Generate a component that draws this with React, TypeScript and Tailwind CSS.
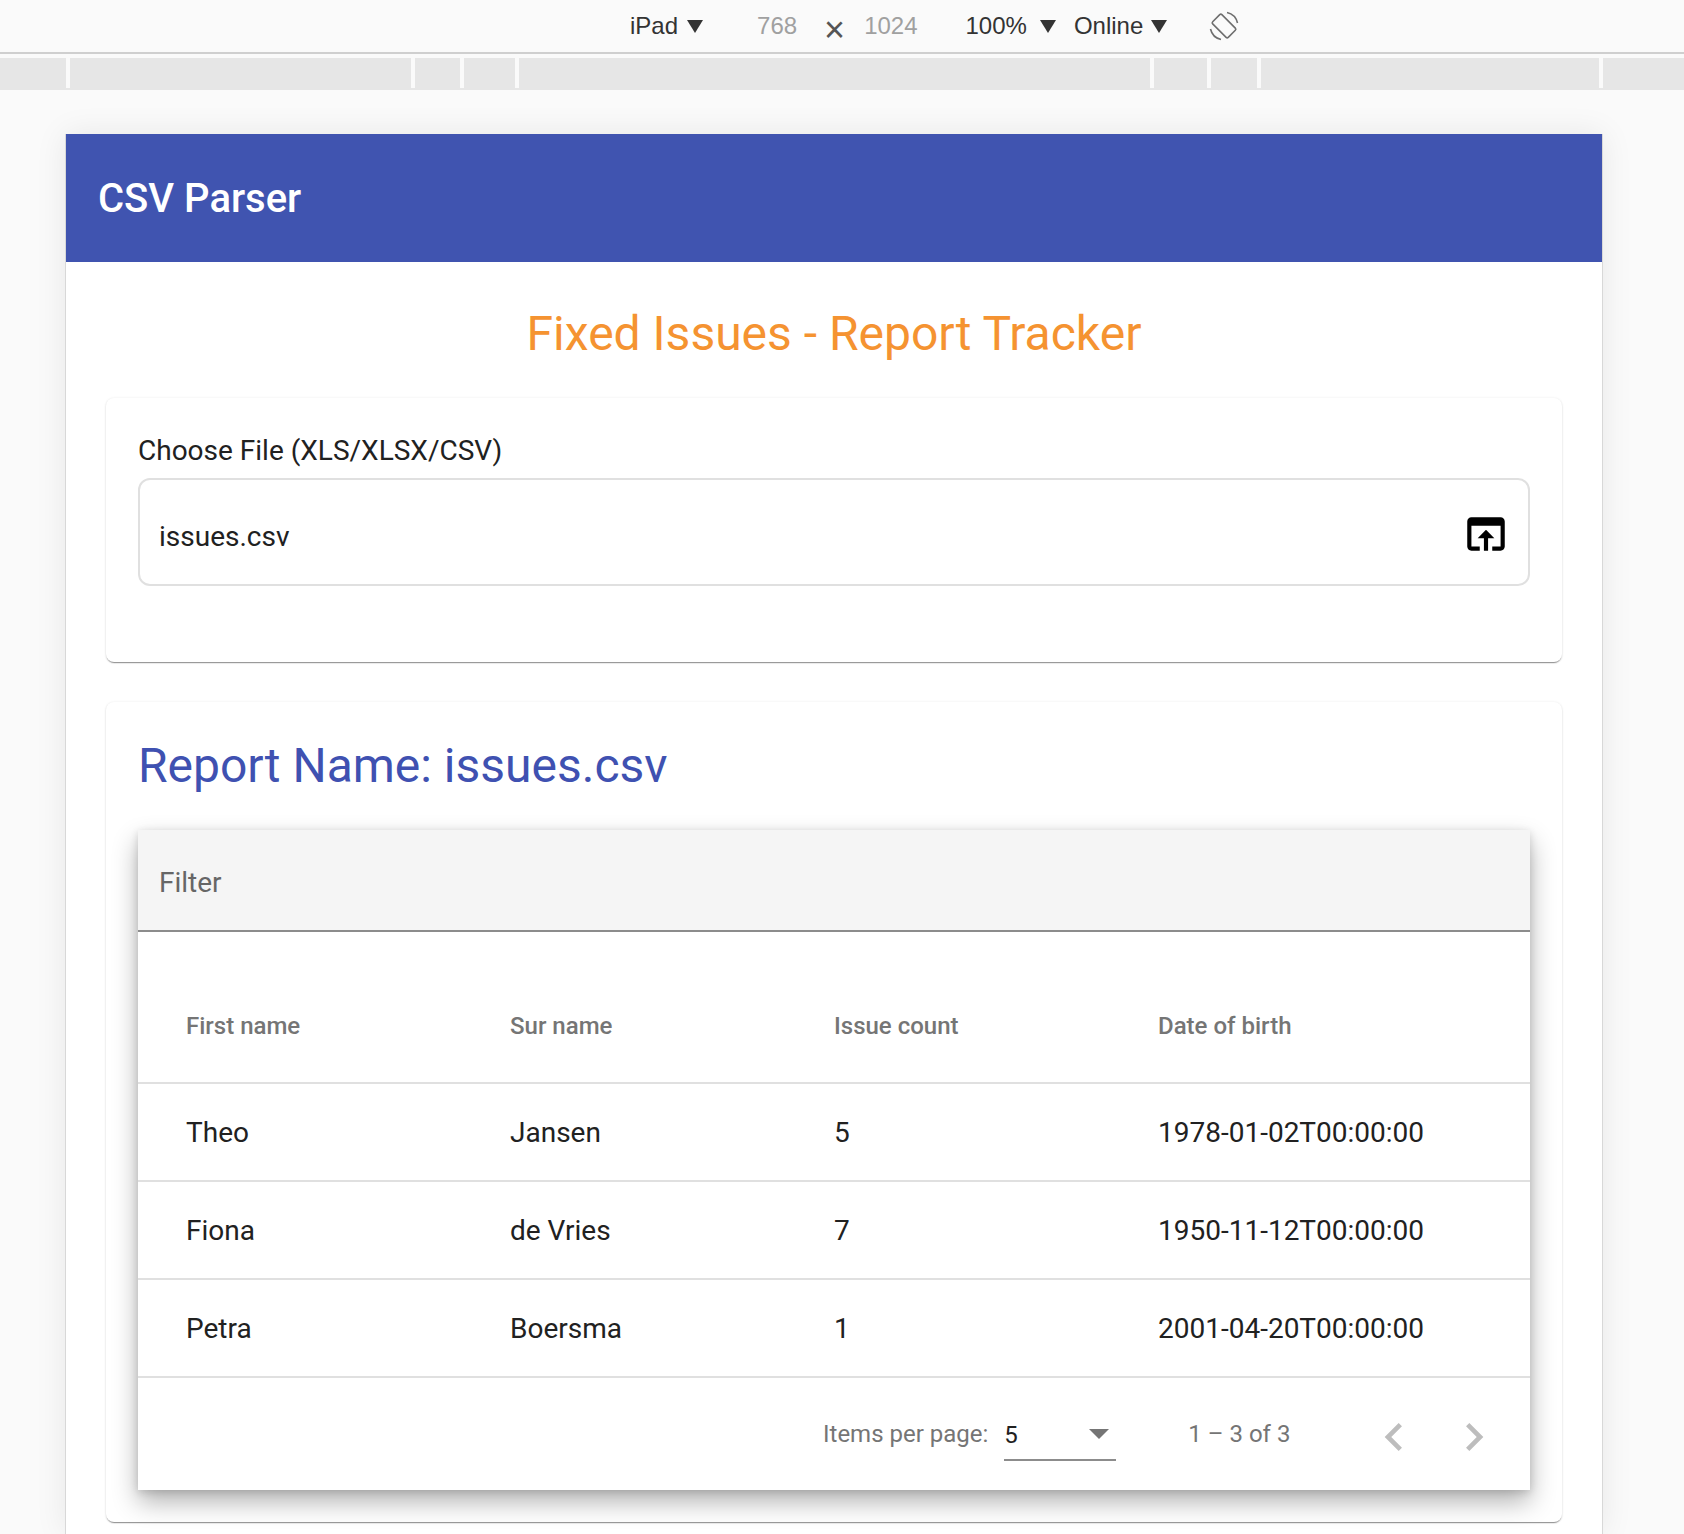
// App.tsx
const people = [
  { first: 'Theo', last: 'Jansen', count: '5', dob: '1978-01-02T00:00:00' },
  { first: 'Fiona', last: 'de Vries', count: '7', dob: '1950-11-12T00:00:00' },
  { first: 'Petra', last: 'Boersma', count: '1', dob: '2001-04-20T00:00:00' },
];

function Caret({ className }: { className: string }) {
  return <span className={`h-0 w-0 border-x-[8px] border-t-[13px] border-x-transparent border-t-[#333] ${className}`} />;
}

function DeviceToolbar() {
  return (
    <div className="h-[54px] shrink-0 border-b-2 border-[#cfcfcf] bg-[#fafafa] font-['Liberation_Sans',sans-serif] text-2xl text-[#333]">
      <div className="flex h-[52px] items-center pl-[630px]">
        <span>iPad</span>
        <Caret className="ml-[9px]" />
        <span className="ml-[54px] text-[#a0a0a0]">768</span>
        <span className="ml-[27px] mt-2 text-[36px] leading-none text-[#555]">×</span>
        <span className="ml-[19px] text-[#a0a0a0]">1024</span>
        <span className="ml-12">100%</span>
        <Caret className="ml-[13px]" />
        <span className="ml-[18px]">Online</span>
        <Caret className="ml-2" />
        {/* rotate icon */}
        <svg className="ml-[42px]" width="30" height="30" viewBox="0 0 30 30" fill="none" stroke="#6e6e6e" strokeWidth="1.6">
          <rect x="8.5" y="4" width="13" height="22" rx="1.5" transform="rotate(-45 15 15)" />
          <path d="M18 1.5A14 14 0 0 1 28.5 12M12 28.5A14 14 0 0 1 1.5 18" />
        </svg>
      </div>
    </div>
  );
}

function Ruler() {
  const gaps = [70, 345, 49, 55, 635, 57, 50, 342];
  return (
    <div className="mt-1 flex h-8 shrink-0 items-start bg-[#e6e6e6]">
      {gaps.map((w, i) => (
        <div key={i} className="flex items-start" style={{ paddingLeft: w - 4 }}>
          <div className="h-[30px] w-1 bg-[#fafafa]" />
        </div>
      ))}
    </div>
  );
}

function ReportTable() {
  return (
    <div className="bg-white shadow-[0_12px_24px_rgba(0,0,0,0.3),0_2px_8px_rgba(0,0,0,0.14)]">
      <div className="flex h-[102px] items-center border-b-2 border-[#8c8c8c] bg-[#f5f5f5] pl-[21px] pt-[5px] text-[28px] text-[#666]">
        Filter
      </div>
      <div className="grid h-[152px] grid-cols-4 items-center border-b-2 border-[#e0e0e0] px-12 pt-[38px] text-2xl font-medium text-[#757575]">
        <div>First name</div>
        <div>Sur name</div>
        <div>Issue count</div>
        <div>Date of birth</div>
      </div>
      {people.map((p) => (
        <div key={p.first} className="grid h-[98px] grid-cols-4 items-center border-b-2 border-[#e0e0e0] px-12 pt-[2px] text-[28px] text-[#212121]">
          <div>{p.first}</div>
          <div>{p.last}</div>
          <div>{p.count}</div>
          <div>{p.dob}</div>
        </div>
      ))}
      <div className="flex h-[112px] items-center pl-[685px] text-2xl text-[#757575]">
        <span>Items per page:</span>
        <div className="relative ml-4 mt-[1px] flex h-[52px] w-28 items-center border-b-2 border-[#8c8c8c] pt-[2px] text-[#212121]">
          5
          <span className="absolute right-[7px] top-5 h-0 w-0 border-x-[10px] border-t-[10px] border-x-transparent border-t-[#757575]" />
        </div>
        <span className="ml-[72px]">1 – 3 of 3</span>
        <svg className="ml-[76px] mt-[6px]" width="56" height="56" viewBox="0 0 24 24" fill="#bdbdbd">
          <path d="M15.41 7.41L14 6l-6 6 6 6 1.41-1.41L10.83 12z" />
        </svg>
        <svg className="ml-6 mt-[6px]" width="56" height="56" viewBox="0 0 24 24" fill="#bdbdbd">
          <path d="M8.59 16.59L10 18l6-6-6-6-1.41 1.41L13.17 12z" />
        </svg>
      </div>
    </div>
  );
}

export default function App() {
  return (
    <div className="flex h-[1534px] flex-col overflow-hidden bg-[#fafafa] font-['Roboto',sans-serif]">
      <DeviceToolbar />
      <Ruler />
      <div className="ml-[65px] mt-11 w-[1538px] flex-1 border-x border-[#d8d8d8] bg-white shadow-[0_0_30px_rgba(0,0,0,0.08)]">
        <header className="flex h-32 items-center bg-[#4054b0] pl-8 pt-[2px] text-[40px] font-medium text-white">
          CSV Parser
        </header>
        <div className="px-10">
          <h1 className="flex h-[136px] items-center justify-center pt-[7px] text-5xl text-[#f59331]">
            Fixed Issues - Report Tracker
          </h1>
          <section className="h-[264px] rounded-lg bg-white p-8 shadow-[0_2px_1px_-1px_rgba(0,0,0,0.35),0_1px_2px_rgba(0,0,0,0.14),0_0_3px_rgba(0,0,0,0.06)]">
            <label className="block pt-[5px] text-[28px] leading-8 text-[#212121]">Choose File (XLS/XLSX/CSV)</label>
            <div className="mt-[11px] flex h-[108px] items-center justify-between rounded-xl border-2 border-[#e0e0e0] pl-[19px] pr-[17px]">
              <span className="pt-[10px] text-[28px] text-[#212121]">issues.csv</span>
              <svg className="mt-1" width="50" height="50" viewBox="0 0 24 24" fill="#000">
                <path d="M19 4H5c-1.11 0-2 .9-2 2v12c0 1.1.89 2 2 2h4v-2H5V8h14v10h-4v2h4c1.1 0 2-.9 2-2V6c0-1.1-.9-2-2-2zm-7 6l-4 4h3v6h2v-6h3l-4-4z" />
              </svg>
            </div>
          </section>
          <section className="mt-10 rounded-lg bg-white p-8 shadow-[0_2px_1px_-1px_rgba(0,0,0,0.35),0_1px_2px_rgba(0,0,0,0.14),0_0_3px_rgba(0,0,0,0.06)]">
            <h2 className="mb-8 text-5xl leading-16 text-[#3f51b1]">Report Name: issues.csv</h2>
            <ReportTable />
          </section>
        </div>
      </div>
    </div>
  );
}
